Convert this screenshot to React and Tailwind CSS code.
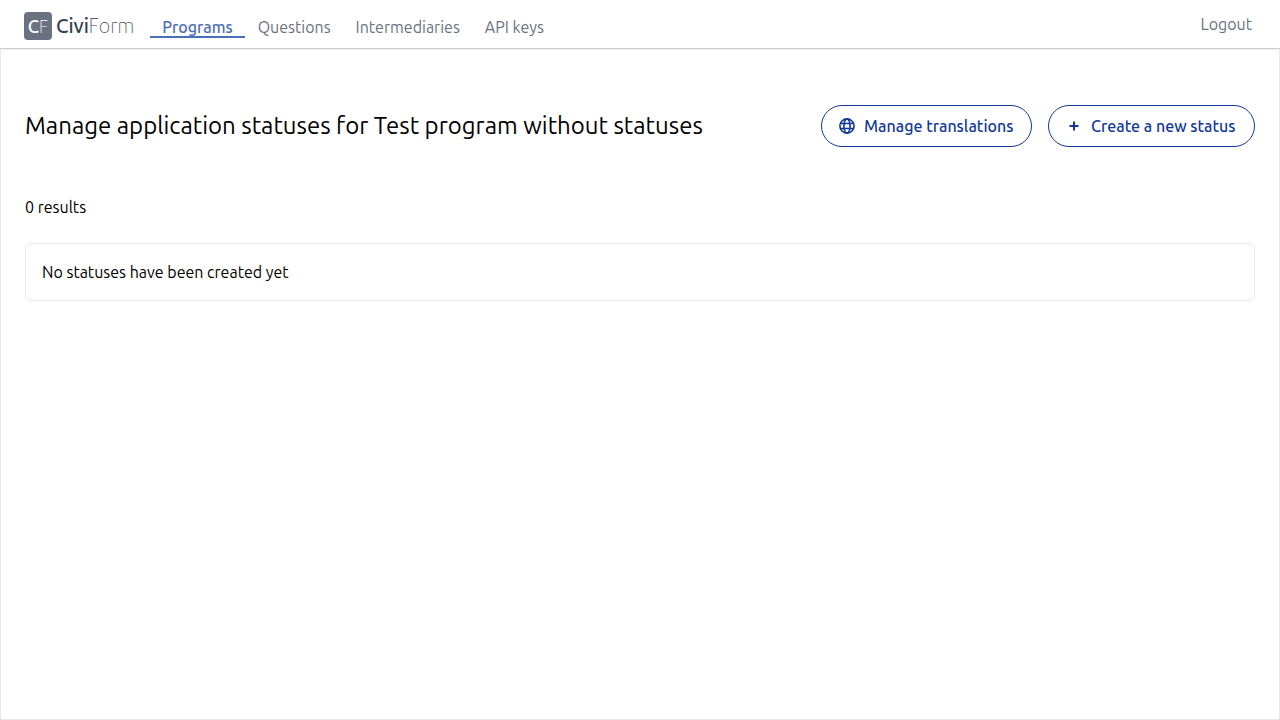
const links = ["Questions", "Intermediaries", "API keys"];

function GlobeIcon() {
  return (
    <svg
      className="size-[18px] shrink-0"
      viewBox="0 0 18 18"
      fill="none"
      stroke="currentColor"
      strokeWidth="1.6"
      aria-hidden="true"
    >
      <circle cx="9" cy="9" r="7.1" />
      <ellipse cx="9" cy="9" rx="3.1" ry="7.1" />
      <path d="M2.3 6.5h13.4M2.3 11.5h13.4" />
    </svg>
  );
}

function PlusIcon() {
  return (
    <svg className="size-[18px] shrink-0" viewBox="0 0 18 18" fill="currentColor" aria-hidden="true">
      <path d="M8 4.5h2V8h3.5v2H10v3.5H8V10H4.5V8H8z" />
    </svg>
  );
}

function OutlineButton({ icon, className, children }) {
  return (
    <button
      type="button"
      className={`${className} flex items-center gap-2 rounded-full border border-[#113997] px-4 py-2 font-medium whitespace-nowrap text-[#113997]`}
    >
      {icon}
      {children}
    </button>
  );
}

export default function App() {
  return (
    <div className="flex min-h-screen flex-col bg-white font-['Ubuntu','Noto_Sans',sans-serif] text-base text-black">
      <header className="flex h-[49px] items-center border-b border-[#cccdd2] pr-7 pl-6 text-gray-500 shadow-[0_1px_1px_rgba(0,0,0,0.05)]">
        <a href="#" className="mt-1 flex items-center gap-1" aria-label="CiviForm">
          <span className="flex size-7 items-center justify-center rounded-sm bg-gray-500 text-lg font-medium text-white">
            C<span className="font-thin">F</span>
          </span>
          <span className="text-xl font-medium text-gray-700">
            Civi<span className="font-thin">Form</span>
          </span>
        </a>
        <nav className="mt-2 ml-4 flex gap-px leading-[18px]">
          <a href="#" aria-current="page" className="border-b-2 border-[#4b6eb9] px-3 font-medium text-[#4b6eb9]">
            Programs
          </a>
          {links.map((label) => (
            <a key={label} href="#" className="px-3">{label}</a>
          ))}
        </nav>
        <a href="#" className="ml-auto">Logout</a>
      </header>
      <main className="flex-1 border-x border-b border-gray-200 px-6 pt-14">
        <div className="flex items-center justify-between gap-4">
          <h1 className="text-2xl">
            Manage application statuses for Test program without statuses
          </h1>
          <div className="flex gap-4">
            <OutlineButton className="min-w-[211px]" icon={<GlobeIcon />}>
              Manage translations
            </OutlineButton>
            <OutlineButton className="min-w-[207px]" icon={<PlusIcon />}>
              Create a new status
            </OutlineButton>
          </div>
        </div>
        <p className="mt-12">0 results</p>
        <div className="mt-6 rounded-md border border-gray-200 p-4">
          No statuses have been created yet
        </div>
      </main>
    </div>
  );
}
